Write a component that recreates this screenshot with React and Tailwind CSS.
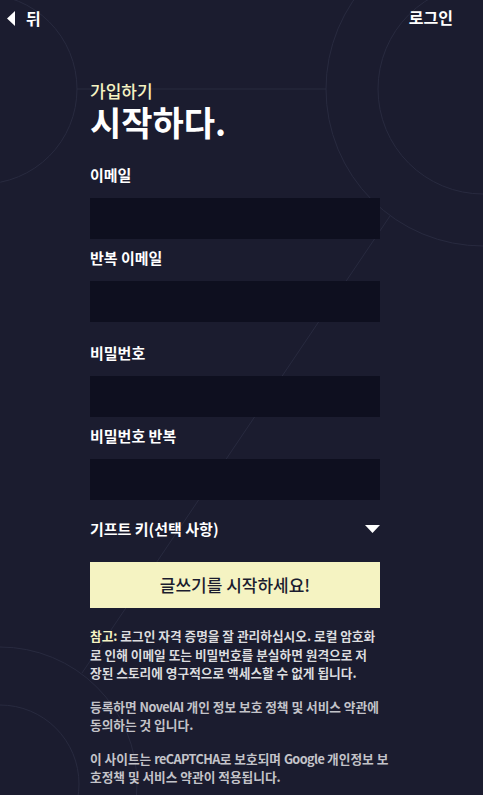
import React from "react"

const font = "font-['Noto_Sans_CJK_KR','Noto_Sans',sans-serif]"

function Backdrop() {
  // faint circles and lines drawn behind the form
  return (
    <svg
      className="pointer-events-none absolute inset-0"
      width="483"
      height="795"
      viewBox="0 0 483 795"
      fill="none"
      stroke="#282a3f"
      strokeWidth="1"
    >
      <circle cx="-18" cy="89" r="95" />
      <line x1="77" y1="89" x2="326" y2="89" />
      <circle cx="483" cy="89" r="157" />
      <circle cx="483" cy="89" r="105" />
      <line x1="390" y1="216" x2="82" y2="673" />
      <circle cx="0" cy="784" r="137" />
      <circle cx="0" cy="784" r="79" />
    </svg>
  )
}

function Field({ label, className = "" }) {
  return (
    <div className={className}>
      <div className="text-[15px] leading-[20px] font-bold text-white">{label}</div>
      <div className="mt-[13px] h-[41px] w-full bg-[#0e0f1f]" />
    </div>
  )
}

function Latin({ children }) {
  return <span className="tracking-[-0.6px]">{children}</span>
}

export default function App() {
  return (
    <div className={`relative min-h-screen w-full overflow-hidden bg-[#1b1c2f] ${font}`}>
      <Backdrop />

      {/* top bar */}
      <div className="relative z-10 flex items-center justify-between pl-[7px] pr-[30px] pt-[7px]">
        <div className="flex items-center gap-[11px]">
          <svg width="8" height="15" viewBox="0 0 8 15">
            <path d="M8 0 L0 7.5 L8 15 Z" fill="#ffffff" />
          </svg>
          <span className="text-[16px] leading-[22px] font-bold text-white">뒤</span>
        </div>
        <span className="-mt-[3px] text-[16px] leading-[20px] font-bold text-white">로그인</span>
      </div>

      <div className="relative z-10 ml-[90px] w-[290px]">
        {/* heading */}
        <div className="mt-[52px] text-[17px] leading-[20px] font-medium text-[#f5f3c2]">가입하기</div>
        <h1 className="mt-[2px] text-[34px] leading-[38px] font-bold text-white">시작하다.</h1>

        <Field label="이메일" className="mt-[24px]" />
        <Field label="반복 이메일" className="mt-[9px]" />
        <Field label="비밀번호" className="mt-[21px]" />
        <Field label="비밀번호 반복" className="mt-[9px]" />

        {/* gift key toggle */}
        <div className="mt-[19px] flex items-center justify-between">
          <span className="text-[15px] leading-[20px] font-bold text-white">기프트 키(선택 사항)</span>
          <svg width="15" height="8" viewBox="0 0 15 8">
            <path d="M0 0 H15 L7.5 8 Z" fill="#ffffff" />
          </svg>
        </div>

        <button className="mt-[23px] flex h-[46px] w-full items-center justify-center bg-[#f5f3c2] text-[17px] font-medium text-[#1b1c2f]">
          글쓰기를 시작하세요!
        </button>

        {/* notes */}
        <div className="mt-[19px] whitespace-nowrap text-[12.7px] leading-[18.5px] font-bold text-[#dcdcdf]">
          <p>
            <span className="text-[#f5f3c2]">참고:</span> 로그인 자격 증명을 잘 관리하십시오. 로컬 암호화
            <br />로 인해 이메일 또는 비밀번호를 분실하면 원격으로 저
            <br />장된 스토리에 영구적으로 액세스할 수 없게 됩니다.
          </p>
          <p className="mt-[15px] text-[#c3c3c9]">
            등록하면 <Latin>NovelAI</Latin> 개인 정보 보호 정책 및 서비스 약관에
            <br />동의하는 것 입니다.
          </p>
          <p className="mt-[15px] text-[#c3c3c9]">
            이 사이트는 <Latin>reCAPTCHA</Latin>로 보호되며 <Latin>Google</Latin> 개인정보 보
            <br />호정책 및 서비스 약관이 적용됩니다.
          </p>
        </div>
      </div>
    </div>
  )
}
